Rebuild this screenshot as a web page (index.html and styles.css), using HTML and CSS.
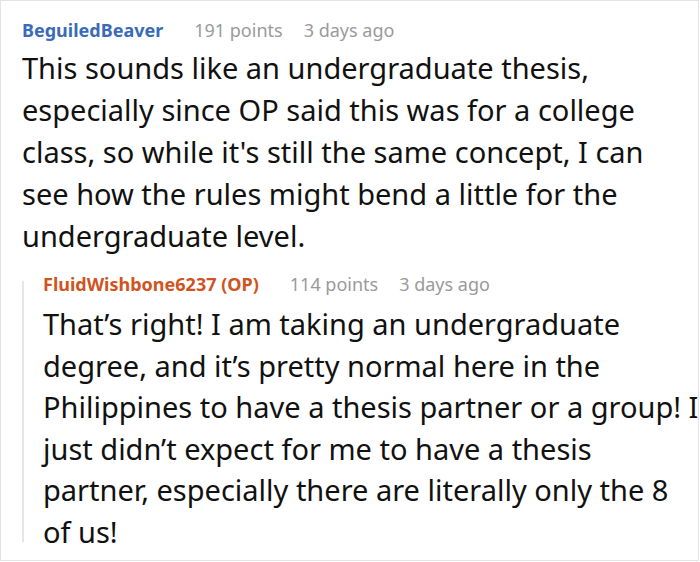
FILE: index.html
```html
<!DOCTYPE html>
<html>
<head>
<meta charset="utf-8">
<link rel="stylesheet" href="styles.css">
</head>
<body>
<div class="frame">
  <div class="comment">
    <div class="meta">
      <span class="user user-blue">BeguiledBeaver</span>
      <span class="info">191 points</span>
      <span class="info">3 days ago</span>
    </div>
    <p class="text">This sounds like an undergraduate thesis,<br>especially since OP said this was for a college<br>class, so while it's still the same concept, I can<br>see how the rules might bend a little for the<br>undergraduate level.</p>
    <div class="reply">
      <div class="rail"></div>
      <div class="reply-body">
        <div class="meta">
          <span class="user user-orange">FluidWishbone6237 (OP)</span>
          <span class="info">114 points</span>
          <span class="info">3 days ago</span>
        </div>
        <p class="text">That’s right! I am taking an undergraduate<br>degree, and it’s pretty normal here in the<br>Philippines to have a thesis partner or a group! I<br>just didn’t expect for me to have a thesis<br>partner, especially there are literally only the 8<br>of us!</p>
      </div>
    </div>
  </div>
</div>
</body>
</html>
```

FILE: styles.css
```css
html, body {
  margin: 0;
  padding: 0;
  background: #fff;
}
.frame {
  width: 699px;
  height: 561px;
  box-sizing: border-box;
  border: 1px solid #e3e3e3;
  overflow: hidden;
  font-family: "Noto Sans", sans-serif;
  color: #111;
}
.comment {
  padding: 17px 0 0 21px;
}
.meta {
  display: flex;
  gap: 21px;
  font-size: 18px;
  line-height: 24px;
  white-space: nowrap;
}
.user {
  font-weight: 700;
  margin-right: 10px;
}
.user-blue { color: #3a6bb8; }
.user-orange { color: #d0541e; }
.info { color: #9a9a9a; }
.text {
  margin: 5px 0 0 0;
  font-size: 29px;
  line-height: 42px;
  white-space: nowrap;
}
.reply {
  display: flex;
  margin-top: 15px;
}
.rail {
  flex: 0 0 2px;
  background: #e6e6e6;
  margin: 9px 19px 11px 0;
}
.reply-body {
  flex: 1;
  min-width: 0;
}
.reply .text {
  margin-top: 7px;
  line-height: 41.6px;
}
```
